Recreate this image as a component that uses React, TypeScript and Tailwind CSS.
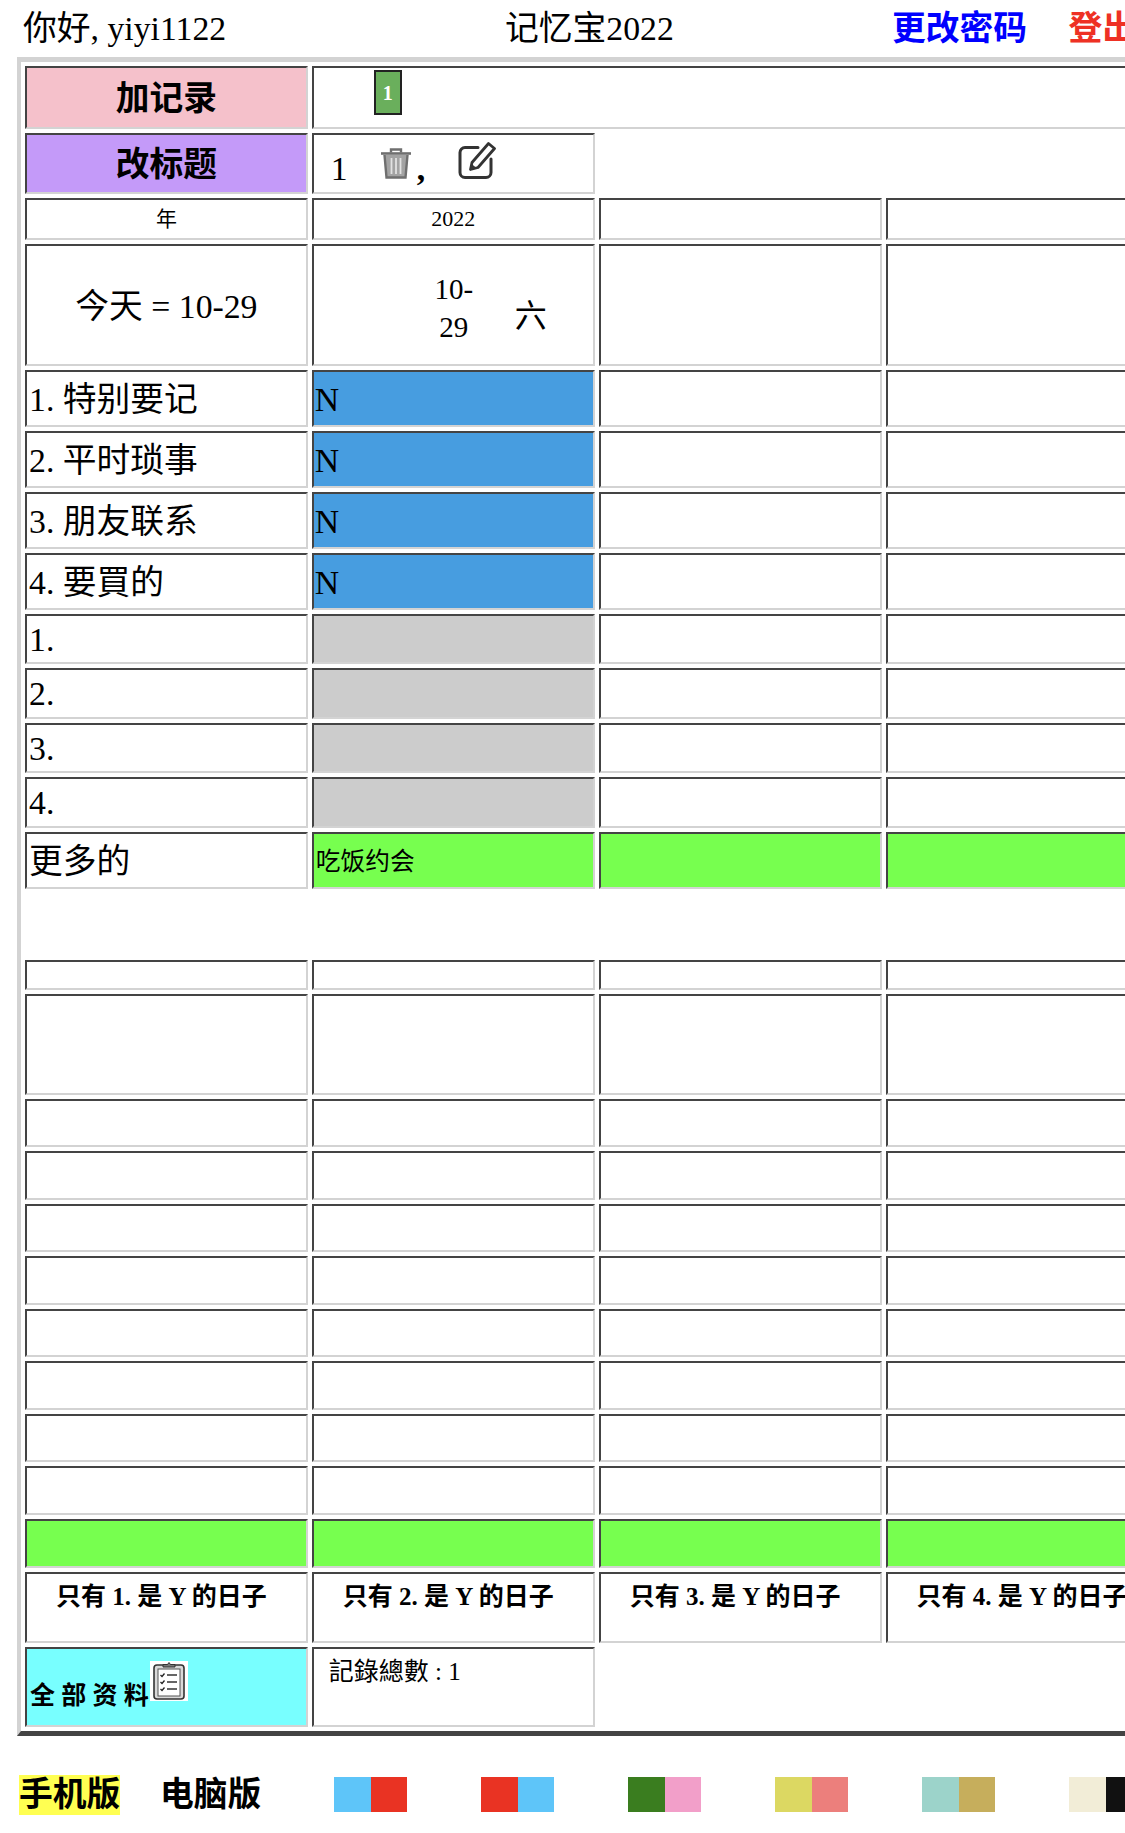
import type { ReactNode } from 'react';

const cellBase =
  'border-2 border-t-[#444444] border-l-[#444444] border-r-[#d3d3d3] border-b-[#d3d3d3] px-[2px] pt-[5px] pb-[2px] align-middle';

interface CellProps {
  className?: string;
  colSpan?: number;
  children?: ReactNode;
}

function Cell({ className = '', colSpan, children }: CellProps) {
  return (
    <td colSpan={colSpan} className={`${cellBase} ${className}`}>
      {children}
    </td>
  );
}

function TrashIcon() {
  return (
    <svg width="32" height="32" viewBox="0 0 32 32" className="mb-[8px] shrink-0">
      <path d="M1 6.500h30" stroke="#6f6f6f" strokeWidth="2.600" />
      <path d="M11 5.500V2.500h10v3" fill="none" stroke="#6f6f6f" strokeWidth="2.400" />
      <path d="M4.500 8l2 22.500h19l2-22.500" fill="#a3a3a3" stroke="#6f6f6f" strokeWidth="2.400" />
      <path d="M11.500 11v16M16 11v16M20.500 11v16" stroke="#e2e2e2" strokeWidth="1.800" />
    </svg>
  );
}

function EditIcon() {
  return (
    <svg width="38" height="38" viewBox="0 0 38 38" className="mb-[8px] shrink-0">
      <path
        d="M20 6.500H7a5 5 0 0 0-5 5v20a5 5 0 0 0 5 5h21a5 5 0 0 0 5-5V18"
        fill="none"
        stroke="#333333"
        strokeWidth="3"
        strokeLinecap="round"
      />
      <path
        d="M12.500 28.500l1.500-7L30.500 2.500l6 5L20 26.500z"
        fill="#ffffff"
        stroke="#333333"
        strokeWidth="2.800"
        strokeLinejoin="round"
      />
      <path d="M12.500 28.500l1.200-5.500 4.500 3.700z" fill="#333333" />
    </svg>
  );
}

function ClipboardIcon() {
  return (
    <span className="ml-[1px] inline-block h-[40px] w-[38px] bg-white align-[3px]">
      <svg width="38" height="40" viewBox="0 0 38 40">
        <rect x="4" y="4" width="30" height="34" rx="3" fill="#d9d9d9" stroke="#333333" strokeWidth="1.600" />
        <rect x="8" y="8" width="22" height="27" fill="#ffffff" stroke="#555555" strokeWidth="1" />
        <path d="M13 6V3.500h4.500L19 1.500l1.500 2H25V6z" fill="#777777" stroke="#333333" strokeWidth="1" />
        <path
          d="M10.500 14l1.500 1.500 2.500-3M10.500 21l1.500 1.500 2.500-3M10.500 28l1.500 1.500 2.500-3"
          fill="none"
          stroke="#222222"
          strokeWidth="1.300"
        />
        <path d="M17 14h10M17 21h10M17 28h10" stroke="#666666" strokeWidth="2" />
      </svg>
    </span>
  );
}

const swatches = [
  ['bg-[#5ec5f9]', 'bg-[#e93323]'],
  ['bg-[#e93323]', 'bg-[#5ec5f9]'],
  ['bg-[#3a7d1f]', 'bg-[#f29fc9]'],
  ['bg-[#dcd862]', 'bg-[#ec7f7c]'],
  ['bg-[#9cd3ca]', 'bg-[#c6ae5c]'],
  ['bg-[#f2edd7]', 'bg-[#111111]'],
];

const labelRows = ['1. 特别要记', '2. 平时琐事', '3. 朋友联系', '4. 要買的'];

const filterTitles = ['只有 1. 是 Y 的日子', '只有 2. 是 Y 的日子', '只有 3. 是 Y 的日子', '只有 4. 是 Y 的日子'];

export default function App() {
  return (
    <div className="h-[1833px] w-[1125px] overflow-hidden bg-white font-['Liberation_Serif','Noto_Sans_CJK_SC',serif] text-[33.750px] leading-[38px] text-black">
      <div className="flex h-[57px] items-center whitespace-nowrap pl-[23px]">
        <div className="w-[482px] shrink-0">你好, yiyi1122</div>
        <div className="w-[387px] shrink-0">记忆宝2022</div>
        <div className="w-[176.500px] shrink-0 font-bold text-[#0000ff]">更改密码</div>
        <div className="shrink-0 font-bold text-[#ee3124]">登出</div>
      </div>

      <table className="ml-[17px] w-[1159.500px] table-fixed border-separate border-spacing-[4px] border-t-[5px] border-r-4 border-b-[5px] border-l-4 border-solid border-t-[#d3d3d3] border-r-[#444444] border-b-[#444444] border-l-[#d3d3d3]">
        <colgroup>
          <col className="w-[282px]" />
          <col className="w-[282px]" />
          <col className="w-[282px]" />
          <col className="w-[282px]" />
        </colgroup>
        <tbody>
          <tr>
            <Cell className="h-[63.300px] bg-[#f5c1cb] text-center font-bold">加记录</Cell>
            <Cell colSpan={3} className="h-[63.300px] !pt-[2px] !align-top">
              <div className="ml-[58px] flex h-[45px] w-[28px] items-center justify-center border-2 border-[#222222] bg-[#6aaf5c] text-[20px] font-bold text-white">
                1
              </div>
            </Cell>
          </tr>
          <tr>
            <Cell className="h-[60.700px] bg-[#c49af9] text-center font-bold">改标题</Cell>
            <Cell className="h-[60.700px] !pt-[2px] !align-top">
              <div className="flex h-[50px] items-end pl-[15px]">
                <span className="w-[49px] leading-[36px]">1</span>
                <TrashIcon />
                <span className="mb-[5px] ml-[5px] w-[41px] font-bold leading-[26px]">,</span>
                <EditIcon />
              </div>
            </Cell>
          </tr>
          <tr>
            <Cell className="h-[42.300px] !pt-[2px] text-center text-[21px] !leading-[28px]">年</Cell>
            <Cell className="h-[42.300px] !pt-[2px] text-center text-[22px] !leading-[28px]">2022</Cell>
            <Cell className="h-[42.300px]" />
            <Cell className="h-[42.300px]" />
          </tr>
          <tr>
            <Cell className="h-[121.700px] text-center">今天 = 10-29</Cell>
            <Cell className="h-[121.700px]">
              <div className="flex items-center">
                <div className="mt-[2px] ml-[102px] w-[72px] text-center text-[29px]">
                  10-
                  <br />
                  29
                </div>
                <div className="mt-[18px] ml-[25px] text-[32px]">六</div>
              </div>
            </Cell>
            <Cell className="h-[121.700px]" />
            <Cell className="h-[121.700px]" />
          </tr>
          {labelRows.map((label) => (
            <tr key={label}>
              <Cell className="h-[56.900px] whitespace-nowrap">{label}</Cell>
              <Cell className="h-[56.900px] !pl-[1px] bg-[#479de0]">N</Cell>
              <Cell className="h-[56.900px]" />
              <Cell className="h-[56.900px]" />
            </tr>
          ))}
          {['1.', '2.', '3.', '4.'].map((label) => (
            <tr key={label}>
              <Cell className="h-[50.500px] !pt-[4px]">{label}</Cell>
              <Cell className="h-[50.500px] bg-[#cccccc]" />
              <Cell className="h-[50.500px]" />
              <Cell className="h-[50.500px]" />
            </tr>
          ))}
          <tr>
            <Cell className="h-[57px]">更多的</Cell>
            <Cell className="h-[57px] bg-[#77ff4f] text-[24.700px]">吃饭约会</Cell>
            <Cell className="h-[57px] bg-[#77ff4f]" />
            <Cell className="h-[57px] bg-[#77ff4f]" />
          </tr>
          <tr>
            <td colSpan={4} className="h-[63px] p-0" />
          </tr>
          <tr>
            <Cell className="h-[30px] !p-0" />
            <Cell className="h-[30px] !p-0" />
            <Cell className="h-[30px] !p-0" />
            <Cell className="h-[30px] !p-0" />
          </tr>
          <tr>
            <Cell className="h-[101px]" />
            <Cell className="h-[101px]" />
            <Cell className="h-[101px]" />
            <Cell className="h-[101px]" />
          </tr>
          {[0, 1, 2, 3, 4, 5, 6, 7].map((i) => (
            <tr key={i}>
              <Cell className="h-[48.500px]" />
              <Cell className="h-[48.500px]" />
              <Cell className="h-[48.500px]" />
              <Cell className="h-[48.500px]" />
            </tr>
          ))}
          <tr>
            <Cell className="h-[49px] bg-[#77ff4f]" />
            <Cell className="h-[49px] bg-[#77ff4f]" />
            <Cell className="h-[49px] bg-[#77ff4f]" />
            <Cell className="h-[49px] bg-[#77ff4f]" />
          </tr>
          <tr>
            {filterTitles.map((title) => (
              <Cell
                key={title}
                className="h-[71.300px] !pt-[4px] pr-[12px] text-center text-[25px] font-bold whitespace-nowrap !align-top"
              >
                {title}
              </Cell>
            ))}
          </tr>
          <tr>
            <Cell className="h-[80px] bg-[#78ffff] pl-[3px] text-[25px] font-bold whitespace-nowrap">
              全 部 资 料
              <ClipboardIcon />
            </Cell>
            <Cell className="h-[80px] !pt-[4px] pl-[15px] text-[25px] !align-top">記錄總數 : 1</Cell>
          </tr>
        </tbody>
      </table>

      <div className="mt-[39px] flex items-center font-bold whitespace-nowrap">
        <div className="ml-[19px] h-[40px] w-[101px] shrink-0 bg-[#ffff52] text-center leading-[40px]">手机版</div>
        <div className="ml-[40px] w-[174px] shrink-0 leading-[40px]">电脑版</div>
        <div className="flex shrink-0 gap-[74px]">
          {swatches.map(([left, right]) => (
            <div key={left + right} className="flex h-[35px] shrink-0">
              <div className={`h-full w-[37px] ${left}`} />
              <div className={`h-full w-[36px] ${right}`} />
            </div>
          ))}
        </div>
      </div>
    </div>
  );
}
